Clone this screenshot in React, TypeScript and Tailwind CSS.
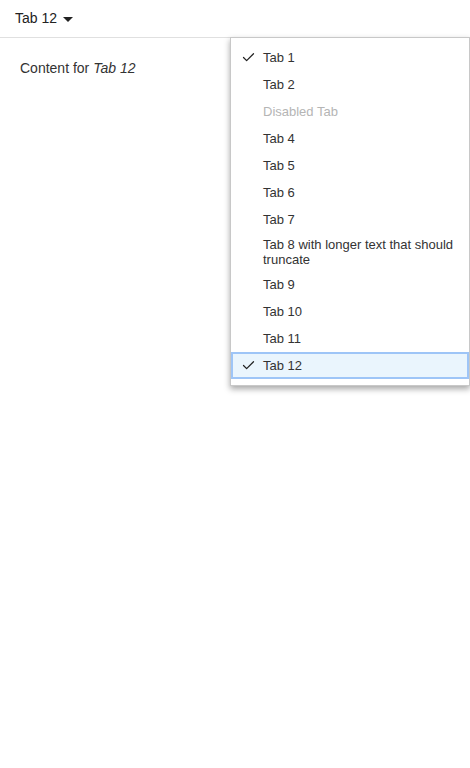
import { Check } from 'lucide-react';

const tabs = [
  { label: 'Tab 1', checked: true },
  { label: 'Tab 2' },
  { label: 'Disabled Tab', disabled: true },
  { label: 'Tab 4' },
  { label: 'Tab 5' },
  { label: 'Tab 6' },
  { label: 'Tab 7' },
  { label: 'Tab 8 with longer text that should truncate' },
  { label: 'Tab 9' },
  { label: 'Tab 10' },
  { label: 'Tab 11' },
  { label: 'Tab 12', checked: true, active: true },
];

export default function App() {
  return (
    <div className="relative min-h-[768px] bg-white font-['Liberation_Sans',Arial,sans-serif] text-[#222]">
      {/* Header with selected tab */}
      <div className="flex h-[38px] items-center border-b border-[#e0e0e0] px-[15px]">
        <span className="text-[14px]">Tab 12</span>
        <svg width="10" height="5" viewBox="0 0 10 5" className="ml-[6px] mt-[1px]">
          <path d="M0 0 L10 0 L5 5 Z" fill="#222" />
        </svg>
      </div>

      <div className="px-5 pt-[20px] text-[14px] text-[#333]">
        Content for <i>Tab 12</i>
      </div>

      {/* Dropdown menu */}
      <div className="absolute right-0 top-[37px] w-[240px] border border-[#c8c8c8] bg-white py-[6px] shadow-[0_3px_6px_rgba(0,0,0,0.35)]">
        {tabs.map((t) => (
          <div
            key={t.label}
            className={
              'flex min-h-[27px] items-center border-2 py-[2px] pr-3 text-[13px] leading-[15px] ' +
              (t.active ? 'border-[#9ec5f7] bg-[#eaf5fd]' : 'border-transparent')
            }
          >
            <span className="flex w-[30px] shrink-0 justify-center pl-[1px]">
              {t.checked && <Check size={15} strokeWidth={2} className="text-[#222]" />}
            </span>
            <span className={t.disabled ? 'text-[#b5b5b5]' : 'text-[#333]'}>{t.label}</span>
          </div>
        ))}
      </div>
    </div>
  );
}
